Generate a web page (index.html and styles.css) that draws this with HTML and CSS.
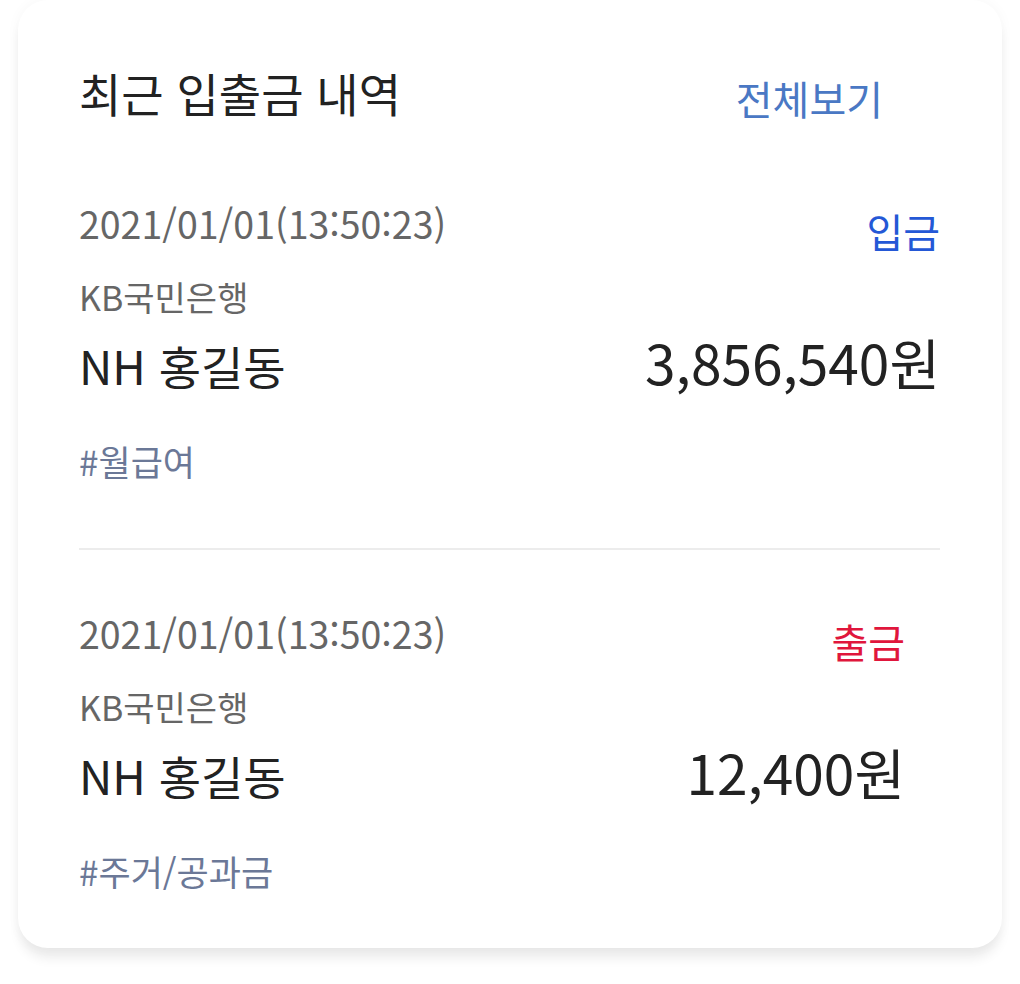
FILE: index.html
```html
<!DOCTYPE html>
<html lang="ko">
<head>
<meta charset="utf-8">
<link rel="stylesheet" href="styles.css">
</head>
<body>
<section class="card">
  <header class="card-head">
    <h2 class="title">최근 입출금 내역</h2>
    <a class="more">전체보기</a>
  </header>
  <div class="tx">
    <div class="tx-row tx-top">
      <span class="date">2021/01/01(13:50:23)</span>
      <span class="type type-in">입금</span>
    </div>
    <div class="bank">KB국민은행</div>
    <div class="tx-row tx-main">
      <span class="name">NH 홍길동</span>
      <span class="amount">3,856,540원</span>
    </div>
    <div class="tag">#월급여</div>
  </div>
  <div class="divider"></div>
  <div class="tx tx-narrow">
    <div class="tx-row tx-top">
      <span class="date">2021/01/01(13:50:23)</span>
      <span class="type type-out">출금</span>
    </div>
    <div class="bank">KB국민은행</div>
    <div class="tx-row tx-main">
      <span class="name">NH 홍길동</span>
      <span class="amount">12,400원</span>
    </div>
    <div class="tag">#주거/공과금</div>
  </div>
</section>
</body>
</html>
```

FILE: styles.css
```css
* { box-sizing: border-box; }
html, body { margin: 0; padding: 0; background: #fff; }
body {
  font-family: "Noto Sans CJK KR", "Noto Sans", sans-serif;
  width: 1020px;
  height: 984px;
  overflow: hidden;
}
.card {
  margin: 0 18px;
  height: 948px;
  background: #fff;
  border-radius: 30px;
  box-shadow: 0 12px 12px -2px rgba(0, 0, 0, 0.08), 0 0 14px rgba(0, 0, 0, 0.035);
  padding: 62px 62px 0 61px;
}
.card-head {
  display: flex;
  justify-content: space-between;
  align-items: flex-start;
  margin-bottom: 12px;
}
.title {
  margin: 0;
  font-size: 46px;
  font-weight: 400;
  color: #222;
  line-height: 60px;
}
.more {
  font-size: 40px;
  line-height: 60px;
  color: #4a78c4;
  margin-top: 6px;
  margin-right: 57px;
}
.tx { padding-top: 58px; }
.tx-row {
  display: flex;
  justify-content: space-between;
}
.tx-top { align-items: flex-start; }
.date {
  font-size: 37.5px;
  color: #666;
  line-height: 50px;
}
.type {
  font-size: 40px;
  line-height: 50px;
  margin-top: 8px;
}
.type-in { color: #2458d6; }
.type-out { color: #e0163c; }
.bank {
  font-size: 34px;
  color: #666;
  line-height: 40px;
  margin-top: 21px;
}
.tx-main {
  align-items: baseline;
  margin-top: 18px;
}
.name {
  font-size: 46px;
  color: #222;
  line-height: 60px;
}
.amount {
  font-size: 55px;
  color: #222;
  line-height: 52px;
}
.tag {
  font-size: 35px;
  color: #6b7897;
  line-height: 44px;
  margin-top: 44px;
}
.divider {
  height: 2px;
  background: #ececec;
  margin-top: 65px;
}
.tx-narrow .tx-row { padding-right: 35px; }
```
